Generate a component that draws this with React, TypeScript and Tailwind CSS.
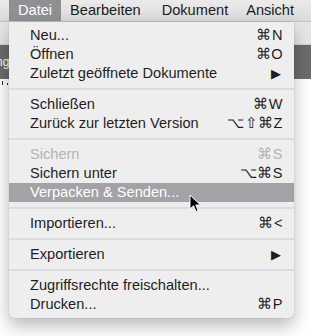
import React from 'react';

type Item =
  | { kind: 'sep' }
  | { kind: 'item'; label: string; key?: string; sub?: boolean; disabled?: boolean; active?: boolean };

const items: Item[] = [
  { kind: 'item', label: 'Neu...', key: '⌘N' },
  { kind: 'item', label: 'Öffnen', key: '⌘O' },
  { kind: 'item', label: 'Zuletzt geöffnete Dokumente', sub: true },
  { kind: 'sep' },
  { kind: 'item', label: 'Schließen', key: '⌘W' },
  { kind: 'item', label: 'Zurück zur letzten Version', key: '⌥⇧⌘Z' },
  { kind: 'sep' },
  { kind: 'item', label: 'Sichern', key: '⌘S', disabled: true },
  { kind: 'item', label: 'Sichern unter', key: '⌥⌘S' },
  { kind: 'item', label: 'Verpacken & Senden...', active: true },
  { kind: 'sep' },
  { kind: 'item', label: 'Importieren...', key: '⌘<' },
  { kind: 'sep' },
  { kind: 'item', label: 'Exportieren', sub: true },
  { kind: 'sep' },
  { kind: 'item', label: 'Zugriffsrechte freischalten...' },
  { kind: 'item', label: 'Drucken...', key: '⌘P' },
];

const Cursor: React.FC = () => (
  <svg width="13" height="19" viewBox="0 0 13 19" className="absolute left-[189px] top-[194px]">
    <path d="M1 1 L1 15 L4.5 11.8 L7 17.5 L9.2 16.5 L6.8 11 L11.5 11 Z" fill="#000" stroke="#fff" strokeWidth="1" strokeLinejoin="round" />
  </svg>
);

const App: React.FC = () => {
  return (
    <div className="relative w-[311px] h-[336px] overflow-hidden bg-white text-[14.6px] font-['Liberation_Sans',Arial,sans-serif]">
      {/* menu bar */}
      <div className="h-[22px] flex items-center bg-gradient-to-b from-[#ebebeb] to-[#dadada] border-b border-[#c4c4c4] text-[#1c1c1c]">
        <div className="ml-[9px] h-full px-[9px] flex items-center bg-[#8f8f94] text-white">Datei</div>
        <div className="ml-[9px]">Bearbeiten</div>
        <div className="ml-[21px]">Dokument</div>
        <div className="ml-[18px]">Ansicht</div>
      </div>
      {/* window behind */}
      <div className="h-[23px] bg-[#e6e6e6] border-b border-[#d0d0d0]" />
      <div className="h-[34px] bg-[#6c6c6c] flex items-center">
        <span className="ml-[-4px] text-[12px] text-white">ng</span>
      </div>
      <div className="h-[6px] bg-white flex items-end gap-[4px] pl-[2px]">
        <div className="w-px h-[4px] bg-[#333]" />
        <div className="w-px h-[2px] bg-[#333]" />
        <div className="w-px h-[2px] bg-[#333]" />
      </div>

      {/* dropdown */}
      <div className="absolute left-[9px] top-[22px] w-[285px] pt-[4px] pb-[4px] bg-[#eeeeee] rounded-b-[5px] shadow-[0_8px_18px_rgba(0,0,0,0.28),0_0_1px_rgba(0,0,0,0.35)]">
        {items.map((it, i) =>
          it.kind === 'sep' ? (
            <div key={i} className="h-[12px] flex items-center">
              <div className="w-full h-[2px] bg-[#dcdcdc]" />
            </div>
          ) : (
            <div
              key={i}
              className={
                'h-[19px] flex items-center justify-between pl-[21px] pr-[11px] ' +
                (it.active ? 'bg-[#a3a2a7] text-white' : it.disabled ? 'text-[#b4b4b4]' : 'text-[#1e1e1e]')
              }
            >
              <span>{it.label}</span>
              {it.key && <span className="tracking-[0.5px]">{it.key}</span>}
              {it.sub && <span className="text-[13px] mr-[2px]">▶</span>}
            </div>
          ),
        )}
      </div>
      <Cursor />
    </div>
  );
};

export default App;
